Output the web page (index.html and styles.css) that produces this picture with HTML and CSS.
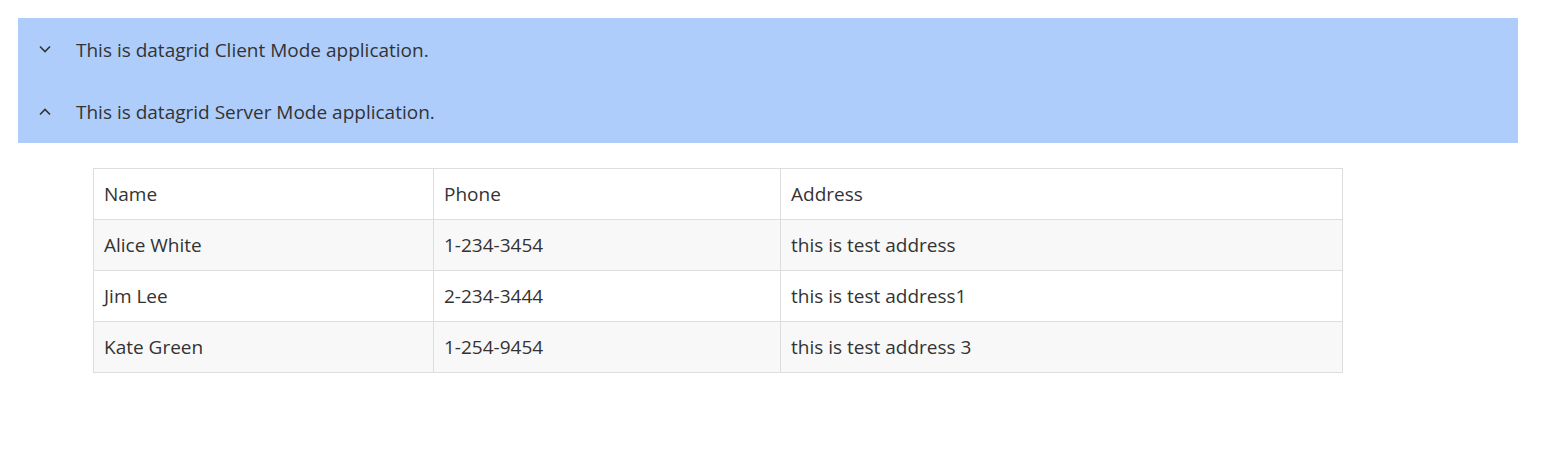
FILE: index.html
```html
<!DOCTYPE html>
<html>
<head>
<meta charset="utf-8">
<link rel="stylesheet" href="styles.css">
</head>
<body>
<div class="accordion">
  <div class="acc-head">
    <span class="chev"><svg width="12" height="8" viewBox="0 0 12 8"><path d="M1 1.5 L6 6.5 L11 1.5" fill="none" stroke="#333" stroke-width="1.6"/></svg></span>
    <span class="acc-title">This is datagrid Client Mode application.</span>
  </div>
  <div class="acc-head">
    <span class="chev"><svg width="12" height="8" viewBox="0 0 12 8"><path d="M1 6.5 L6 1.5 L11 6.5" fill="none" stroke="#333" stroke-width="1.6"/></svg></span>
    <span class="acc-title">This is datagrid Server Mode application.</span>
  </div>
</div>
<div class="acc-body">
  <table class="grid">
    <colgroup><col class="c1"><col class="c2"><col class="c3"></colgroup>
    <thead>
      <tr><th>Name</th><th>Phone</th><th>Address</th></tr>
    </thead>
    <tbody>
      <tr><td>Alice White</td><td>1-234-3454</td><td>this is test address</td></tr>
      <tr><td>Jim Lee</td><td>2-234-3444</td><td>this is test address1</td></tr>
      <tr><td>Kate Green</td><td>1-254-9454</td><td>this is test address 3</td></tr>
    </tbody>
  </table>
</div>
</body>
</html>
```
FILE: styles.css
```css
html, body {
  margin: 0;
  padding: 0;
  background: #fff;
}
body {
  padding: 18px;
  font-family: "Open Sans", "Noto Sans", sans-serif;
  font-size: 19px;
  color: #333;
}
.accordion {
  width: 1500px;
  background: #aecdfb;
}
.acc-head {
  display: flex;
  align-items: center;
  height: 62px;
}
.acc-head + .acc-head {
  height: 63px;
}
.chev {
  width: 54px;
  display: flex;
  justify-content: center;
  margin-right: 4px;
}
.chev svg {
  display: block;
}
.acc-title {
  line-height: 1;
  padding-top: 2px;
}
.acc-body {
  padding: 25px 0 0 75px;
}
.grid {
  border-collapse: collapse;
  width: 1249px;
  table-layout: fixed;
}
.c1 { width: 340px; }
.c2 { width: 347px; }
.c3 { width: 562px; }
.grid th, .grid td {
  border: 1px solid #ddd;
  height: 51px;
  padding: 0 10px;
  text-align: left;
  font-weight: normal;
  box-sizing: border-box;
}
.grid tbody tr:nth-child(odd) td {
  background: #f8f8f8;
}
```
